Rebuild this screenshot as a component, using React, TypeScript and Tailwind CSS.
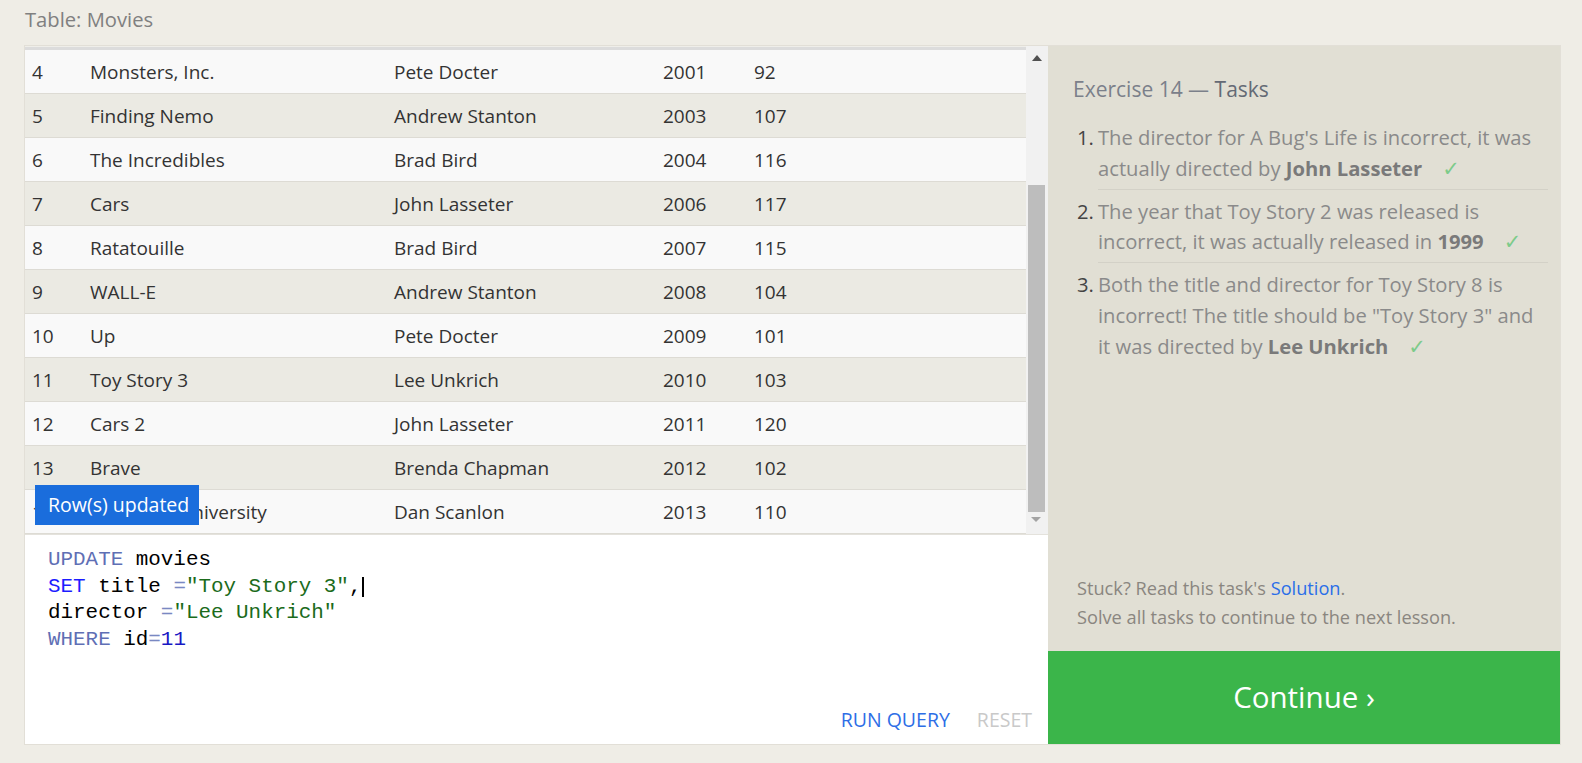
import React from "react";

const rows: [string, string, string, string, string][] = [
  ["4", "Monsters, Inc.", "Pete Docter", "2001", "92"],
  ["5", "Finding Nemo", "Andrew Stanton", "2003", "107"],
  ["6", "The Incredibles", "Brad Bird", "2004", "116"],
  ["7", "Cars", "John Lasseter", "2006", "117"],
  ["8", "Ratatouille", "Brad Bird", "2007", "115"],
  ["9", "WALL-E", "Andrew Stanton", "2008", "104"],
  ["10", "Up", "Pete Docter", "2009", "101"],
  ["11", "Toy Story 3", "Lee Unkrich", "2010", "103"],
  ["12", "Cars 2", "John Lasseter", "2011", "120"],
  ["13", "Brave", "Brenda Chapman", "2012", "102"],
  ["14", "Monsters University", "Dan Scanlon", "2013", "110"],
];

function Check() {
  return (
    <span
      className="ml-[20px] text-[21px] text-[#7dcb8a] font-normal"
      style={{ fontFamily: "'DejaVu Sans', sans-serif" }}
    >
      ✓
    </span>
  );
}

export default function App() {
  return (
    <div
      className="w-full min-h-screen bg-[#efede6] text-[#333]"
      style={{ fontFamily: "'Open Sans', 'Noto Sans', sans-serif" }}
    >
      <div className="pl-[25px] pt-[6px] leading-[26px] text-[20.2px] text-[#808080]">Table: Movies</div>
      <div className="ml-[24px] mt-[13px] w-[1537px] h-[700px] border border-[#e2dfd7] flex">
        {/* Left */}
        <div className="w-[1023px] flex flex-col bg-white">
          <div className="h-[488px] flex relative">
            <div className="w-[1001px] flex flex-col">
              <div className="h-[1px] bg-[#efeee9]" />
              <div className="h-[3px] bg-[#dcdcdc]" />
              {rows.map((r, i) => (
                <div
                  key={r[0]}
                  className={
                    "h-[44px] flex items-center pt-[2px] border-b border-[#dddbd4] text-[19px] " +
                    (i % 2 === 0 ? "bg-[#f9f9f9]" : "bg-[#ebeae3]")
                  }
                >
                  <div className="w-[65px] pl-[7px]">{r[0]}</div>
                  <div className="w-[304px]">{r[1]}</div>
                  <div className="w-[269px]">{r[2]}</div>
                  <div className="w-[91px]">{r[3]}</div>
                  <div className="flex-1">{r[4]}</div>
                </div>
              ))}
            </div>
            <div className="w-[22px] bg-[#f1f1f1] relative flex flex-col items-center">
              <svg className="mt-[9px] ml-[-1px]" width="10" height="6" viewBox="0 0 10 6">
                <polygon points="5,0 10,6 0,6" fill="#505050" />
              </svg>
              <div className="absolute left-[2px] top-[139px] w-[17px] h-[327px] bg-[#bdbdbd]" />
              <svg className="absolute bottom-[12px] left-[5px]" width="10" height="5" viewBox="0 0 10 5">
                <polygon points="0,0 10,0 5,5" fill="#a3a3a3" />
              </svg>
            </div>
            <div className="absolute left-[10px] top-[439px] w-[164px] h-[40px] bg-[#1a6ddc] text-white text-[19.5px] flex items-center pl-[13px] whitespace-nowrap">
              Row(s) updated
            </div>
          </div>
          <div className="flex-1 flex flex-col justify-between border-t border-[#e4e2dc]">
            <div
              className="pt-[12px] pl-[23px] text-[20.9px] leading-[26.7px] text-black"
              style={{ fontFamily: "'Liberation Mono', 'DejaVu Sans Mono', monospace" }}
            >
              <div>
                <span className="text-[#5f6fb5]">UPDATE</span> movies
              </div>
              <div className="flex items-center">
                <span>
                  <span className="text-[#1c1cff]">SET</span> title <span className="text-[#7a88c2]">=</span>
                  <span className="text-[#1b6b1b]">"Toy Story 3"</span>,
                </span>
                <span className="inline-block w-[2px] h-[20px] bg-black ml-[1px]" />
              </div>
              <div>
                director <span className="text-[#7a88c2]">=</span>
                <span className="text-[#1b6b1b]">"Lee Unkrich"</span>
              </div>
              <div>
                <span className="text-[#5f6fb5]">WHERE</span> id<span className="text-[#7a88c2]">=</span>
                <span className="text-[#1818c4]">11</span>
              </div>
            </div>
            <div className="flex justify-end items-center gap-[27px] pr-[16px] pb-[12px] text-[19.5px] leading-[24px]">
              <span className="text-[#2d6ee6]">RUN QUERY</span>
              <span className="text-[#c9c9c9]">RESET</span>
            </div>
          </div>
        </div>
        {/* Right */}
        <div className="w-[512px] bg-[#e1dfd4] flex flex-col">
          <div className="flex-1 pl-[25px] pr-[12px] pt-[29px]">
            <div className="text-[21px] leading-[28px] text-[#7b808a]">
              Exercise 14 — <span className="text-[#646a75]">Tasks</span>
            </div>
            <ol className="mt-[19px] ml-[4px] text-[20.2px] leading-[30.8px] text-[#8a8a8a]">
              <li className="flex">
                <span className="w-[21px] shrink-0 text-[#444]">1.</span>
                <div className="flex-1 pb-[4px] border-b border-[#d3d1c7] whitespace-nowrap">
                  The director for A Bug's Life is incorrect, it was
                  <br />
                  actually directed by <b className="text-[#7a7a7a]">John Lasseter</b>
                  <Check />
                </div>
              </li>
              <li className="flex pt-[6px]">
                <span className="w-[21px] shrink-0 text-[#444]">2.</span>
                <div className="flex-1 pb-[4px] border-b border-[#d3d1c7] whitespace-nowrap">
                  The year that Toy Story 2 was released is
                  <br />
                  incorrect, it was actually released in <b className="text-[#7a7a7a]">1999</b>
                  <Check />
                </div>
              </li>
              <li className="flex pt-[6px]">
                <span className="w-[21px] shrink-0 text-[#444]">3.</span>
                <div className="flex-1 whitespace-nowrap">
                  Both the title and director for Toy Story 8 is
                  <br />
                  incorrect! The title should be "Toy Story 3" and
                  <br />
                  it was directed by <b className="text-[#7a7a7a]">Lee Unkrich</b>
                  <Check />
                </div>
              </li>
            </ol>
          </div>
          <div className="pl-[29px] pb-[20px] text-[18.2px] leading-[28.3px] text-[#8a8680]">
            <div>
              Stuck? Read this task's <span className="text-[#2a6ee8]">Solution</span>.
            </div>
            <div>Solve all tasks to continue to the next lesson.</div>
          </div>
          <div className="h-[93px] bg-[#3bb54a] flex items-center justify-center text-white text-[29.5px]">
            Continue ›
          </div>
        </div>
      </div>
    </div>
  );
}
